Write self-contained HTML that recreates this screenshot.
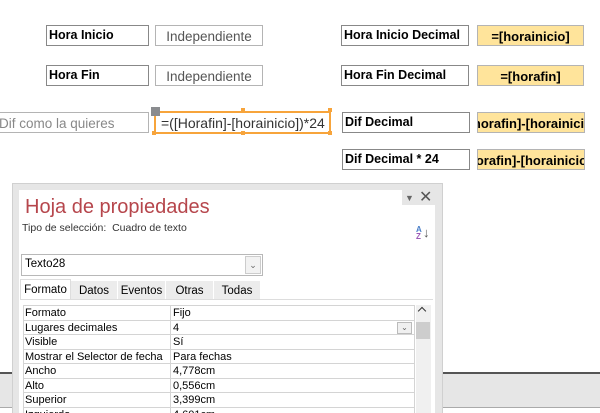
<!DOCTYPE html>
<html><head><meta charset="utf-8"><style>
*{margin:0;padding:0;box-sizing:border-box}
html,body{width:600px;height:413px;overflow:hidden}
body{background:#fff;position:relative;font-family:"Liberation Sans",sans-serif}
.a{position:absolute}
.lbl{position:absolute;border:1px solid #888;background:#fff;font-weight:bold;font-size:12.5px;padding:2px 0 0 2px;height:21px;color:#000;white-space:nowrap;overflow:hidden}
.ind{position:absolute;border:1px solid #b4b4b4;background:#fff;font-size:13.5px;color:#555;text-align:center;padding-top:3px;height:21px;white-space:nowrap;overflow:hidden}
.yel{position:absolute;border:1px solid #b4b4b4;background:#ffe49b;font-weight:bold;font-size:13px;padding-top:3px;height:21px;white-space:nowrap;overflow:hidden}
.row{position:absolute;left:23px;width:392px;height:14.5px;border-bottom:1px solid #d4d4d4;font-size:11px;color:#000}
.row span{position:absolute;top:0;line-height:14px;white-space:nowrap}
.tab{position:absolute;top:281px;height:19px;background:#ececec;font-size:11.5px;text-align:center;padding-top:4px;border-right:1px solid #fff}
</style></head><body>
<div class="lbl" style="left:46px;top:25px;width:103px">Hora Inicio</div>
<div class="ind" style="left:155px;top:25px;width:108px">Independiente</div>
<div class="lbl" style="left:46px;top:65px;width:103px">Hora Fin</div>
<div class="ind" style="left:155px;top:65px;width:108px">Independiente</div>
<div class="ind" style="left:-8px;top:112px;width:157px;text-align:left;color:#888;padding-left:6px">Dif como la quieres</div>
<div class="a" style="left:154px;top:111px;width:177px;height:23px;border:2px solid #f7a43b;background:#fff;font-size:14px;color:#333;padding:2px 0 0 5px;white-space:nowrap">=([Horafin]-[horainicio])*24</div>
<div class="a" style="left:151px;top:107px;width:9px;height:9px;background:#8a8c8f"></div>
<div class="a" style="left:241px;top:108px;width:4px;height:4px;background:#f7a43b"></div>
<div class="a" style="left:328px;top:108px;width:4px;height:4px;background:#f7a43b"></div>
<div class="a" style="left:152px;top:131px;width:4px;height:4px;background:#f7a43b"></div>
<div class="a" style="left:241px;top:131px;width:4px;height:4px;background:#f7a43b"></div>
<div class="a" style="left:328px;top:131px;width:4px;height:4px;background:#f7a43b"></div>

<div class="lbl" style="left:341px;top:25px;width:128px">Hora Inicio Decimal</div>
<div class="yel" style="left:477px;top:25px;width:107px;text-align:center">=[horainicio]</div>
<div class="lbl" style="left:341px;top:65px;width:128px">Hora Fin Decimal</div>
<div class="yel" style="left:477px;top:65px;width:107px;text-align:center">=[horafin]</div>
<div class="lbl" style="left:342px;top:112px;width:128px">Dif Decimal</div>
<div class="yel" style="left:477px;top:112px;width:108px;text-indent:-17px">=[horafin]-[horainicio]</div>
<div class="lbl" style="left:342px;top:149px;width:128px">Dif Decimal * 24</div>
<div class="yel" style="left:477px;top:149px;width:108px;text-indent:-22px">=[horafin]-[horainicio]</div>

<div class="a" style="left:0;top:372px;width:600px;height:2px;background:#555"></div>
<div class="a" style="left:0;top:374px;width:600px;height:33px;background:#e6e6e6"></div>
<div class="a" style="left:0;top:407px;width:600px;height:1px;background:#aaa"></div>

<div class="a" style="left:12px;top:183px;width:431px;height:240px;background:#e6e6e6;border:1px solid #d0d0d0"></div>
<div class="a" style="left:19px;top:190px;width:416px;height:230px;background:#fff"></div>
<div class="a" style="left:402px;top:190px;width:33px;height:15px;background:#e6e6e6"></div>
<div class="a" style="left:405px;top:193px;font-size:9px;color:#666">&#9660;</div>
<div class="a" style="left:419px;top:187px;font-size:16px;color:#555">&#10005;</div>
<div class="a" style="left:25px;top:196px;font-size:20px;color:#b6464c">Hoja de propiedades</div>
<div class="a" style="left:22px;top:222px;font-size:10.5px;color:#333">Tipo de selección:&nbsp; Cuadro de texto</div>
<div class="a" style="left:416px;top:226px;font-size:8px;line-height:7px;font-weight:bold"><span style="color:#4a7fc8">A</span><br><span style="color:#9b59b6">Z</span></div>
<div class="a" style="left:423px;top:225px;font-size:13px;color:#555">&#8595;</div>

<div class="a" style="left:21px;top:254px;width:242px;height:22px;border:1px solid #b8b8b8;font-size:11.5px;padding:3px 0 0 3px">Texto28</div>
<div class="a" style="left:245px;top:256px;width:16px;height:18px;border:1px solid #ccc;background:#f2f2f2;font-size:9px;color:#666;text-align:center;padding-top:3px">&#8964;</div>

<div class="tab" style="left:20px;width:51px;background:#fff;top:279px;height:21px;border:1px solid #ddd;border-bottom:none">Formato</div>
<div class="tab" style="left:71px;width:47px">Datos</div>
<div class="tab" style="left:118px;width:48px">Eventos</div>
<div class="tab" style="left:166px;width:48px">Otras</div>
<div class="tab" style="left:214px;width:47px">Todas</div>
<div class="a" style="left:20px;top:299px;width:413px;height:1px;background:#ddd"></div>

<div class="a" style="left:23px;top:305px;width:392px;height:120px;border:1px solid #d4d4d4;border-bottom:none"></div>
<div class="a" style="left:170px;top:305px;width:1px;height:120px;background:#d4d4d4"></div>
<div class="row" style="top:306px"><span style="left:2px">Formato</span><span style="left:150px">Fijo</span></div>
<div class="row" style="top:320.5px"><span style="left:2px">Lugares decimales</span><span style="left:150px">4</span></div>
<div class="a" style="left:397px;top:322px;width:15px;height:12px;border:1px solid #bbb;background:#f0f0f0;font-size:8px;color:#666;text-align:center">&#8964;</div>
<div class="row" style="top:335px"><span style="left:2px">Visible</span><span style="left:150px">Sí</span></div>
<div class="row" style="top:349.5px"><span style="left:2px">Mostrar el Selector de fecha</span><span style="left:150px">Para fechas</span></div>
<div class="row" style="top:364px"><span style="left:2px">Ancho</span><span style="left:150px">4,778cm</span></div>
<div class="row" style="top:378.5px"><span style="left:2px">Alto</span><span style="left:150px">0,556cm</span></div>
<div class="row" style="top:393px"><span style="left:2px">Superior</span><span style="left:150px">3,399cm</span></div>
<div class="row" style="top:407.5px"><span style="left:2px">Izquierdo</span><span style="left:150px">4,601cm</span></div>

<div class="a" style="left:416px;top:305px;width:15px;height:110px;background:#f0f0f0"></div>
<div class="a" style="left:419px;top:308px;width:6px;height:6px;border-left:1.5px solid #333;border-top:1.5px solid #333;transform:rotate(45deg)"></div>
<div class="a" style="left:416px;top:322px;width:14px;height:17px;background:#cdcdcd"></div>
</body></html>
